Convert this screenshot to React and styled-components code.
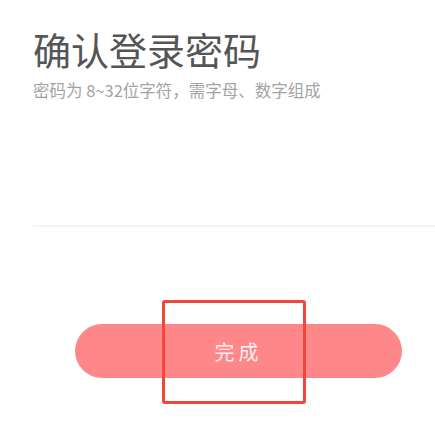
import React, { useState } from 'react';
import styled, { createGlobalStyle } from 'styled-components';

const GlobalStyle = createGlobalStyle`
    body {
        margin: 0;
        background: #ffffff;
        font-family: "Noto Sans CJK SC", "Noto Sans", sans-serif;
    }
`;

const Page = styled.div`
    width: 435px;
    height: 433px;
    overflow: hidden;
    display: flex;
    flex-direction: column;
`;

const Header = styled.div`
    padding: 24px 0 0 33px;
`;

const Title = styled.h1`
    margin: 0;
    font-size: 38px;
    line-height: 50px;
    font-weight: 400;
    color: #555555;
`;

const Hint = styled.p`
    margin: 4px 0 0 0;
    font-size: 16.5px;
    line-height: 24px;
    color: #a3a3a3;
`;

const Field = styled.input`
    margin: 95px 0 0 33px;
    padding: 0;
    height: 28px;
    border: none;
    border-bottom: 2px solid #f4f4f4;
    outline: none;
    background: transparent;
    font-size: 16px;
    font-family: inherit;
`;

const ButtonRow = styled.div`
    position: relative;
    margin: 97px 0 0 75px;
    width: 327px;
`;

const DoneButton = styled.button`
    width: 100%;
    height: 54px;
    border: none;
    border-radius: 27px;
    background: #fd8789;
    color: #fdeeee;
    font-size: 20px;
    letter-spacing: 4px;
    font-family: inherit;
    cursor: pointer;
`;

// annotation box drawn over the button
const Highlight = styled.div`
    position: absolute;
    left: 87px;
    top: -24px;
    width: 138px;
    height: 98px;
    border: 3px solid #f2463a;
    border-radius: 3px;
    pointer-events: none;
`;

const App = () => {
    const [password, setPassword] = useState('');

    return (
        <Page>
            <GlobalStyle />
            <Header>
                <Title>确认登录密码</Title>
                <Hint>密码为 8~32位字符，需字母、数字组成</Hint>
            </Header>
            <Field
                type="password"
                value={password}
                onChange={(e) => setPassword(e.target.value)}
            />
            <ButtonRow>
                <DoneButton>完成</DoneButton>
                <Highlight />
            </ButtonRow>
        </Page>
    );
};

export default App;
